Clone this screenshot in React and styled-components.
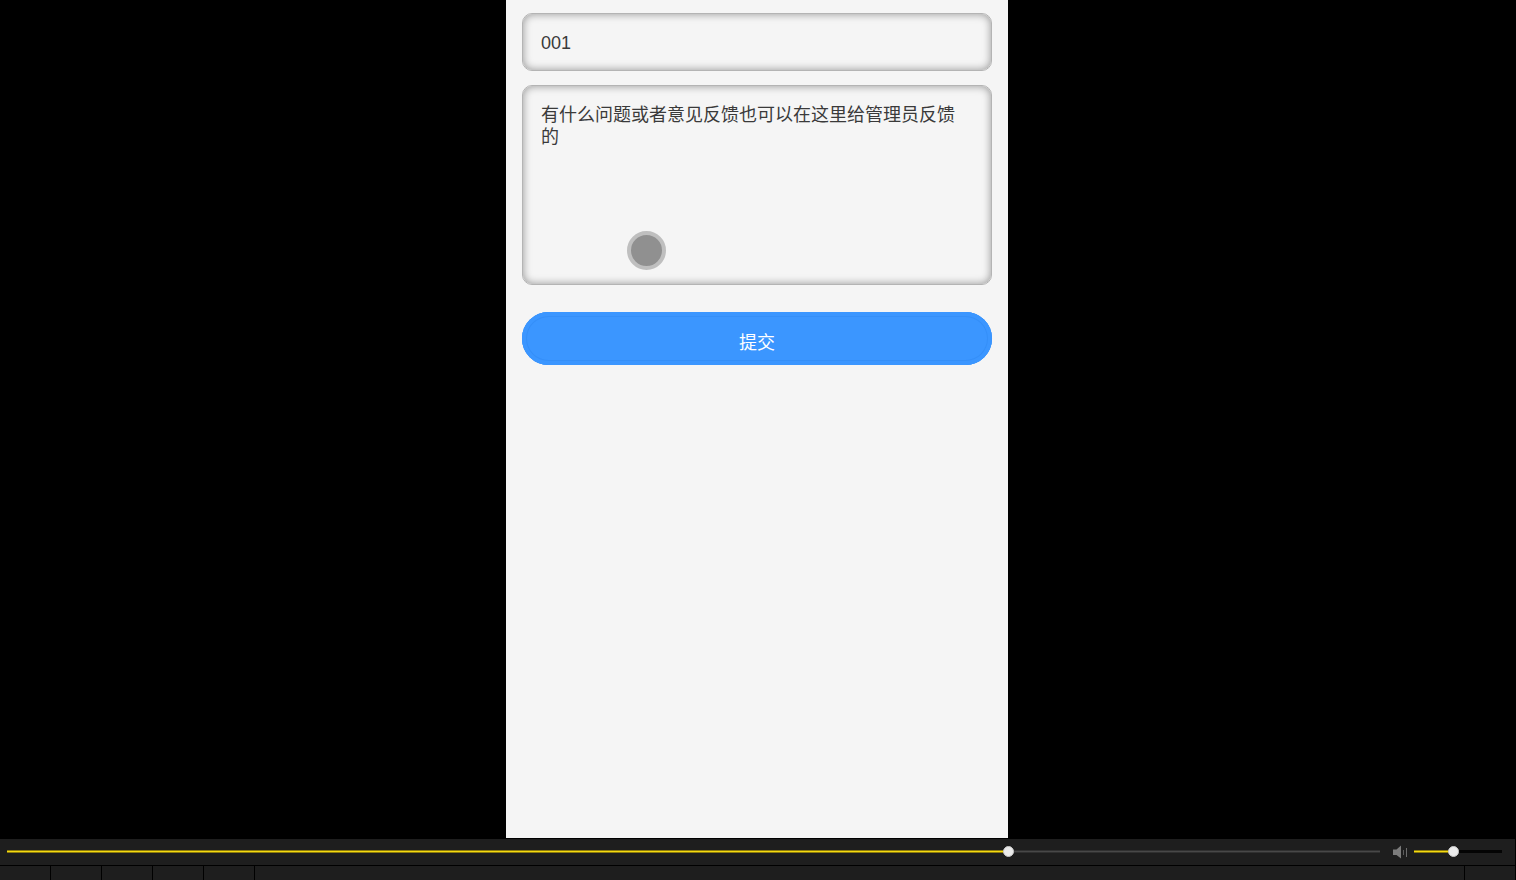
import React, { useState } from "react";
import styled, { createGlobalStyle } from "styled-components";

const GlobalStyle = createGlobalStyle`
    * {
        box-sizing: border-box;
    }
    body {
        margin: 0;
        background-color: #000;
        font-family: "Liberation Sans", "Noto Sans CJK SC", sans-serif;
    }
`;

const TOOL_BUTTONS = ["播放", "停止", "上一个", "下一个", "打开"];

const App = () => {
    const [progress, setProgress] = useState(73.1);
    const [volume, setVolume] = useState(44.2);

    return (
        <Player>
            <GlobalStyle />
            <Stage>
                <Screen onSubmit={(e) => e.preventDefault()}>
                    <NumberInput aria-label="编号" defaultValue="001" />
                    <MessageBox>
                        <Message
                            aria-label="反馈内容"
                            spellCheck={false}
                            defaultValue="有什么问题或者意见反馈也可以在这里给管理员反馈的"
                        />
                        <TouchPoint />
                    </MessageBox>
                    <SubmitButton type="submit">提交</SubmitButton>
                </Screen>
            </Stage>
            <SeekBar>
                <Slider
                    type="range"
                    aria-label="进度"
                    min="0"
                    max="100"
                    step="0.1"
                    $rest="linear-gradient(#303030 1px, #484848 1px 2px, #303030 2px)"
                    value={progress}
                    onChange={(e) => setProgress(e.target.value)}
                    style={{ "--fill": `${progress}%` }}
                />
                <MuteButton type="button" aria-label="静音">
                    <svg width="16" height="14" viewBox="0 0 16 14">
                        <path d="M1 4.5h3.500l4.500-4v13l-4.500-3.500H1z" fill="#7c7c7c" />
                        <path d="M11.5 5v5" stroke="#5c5c5c" />
                        <path d="M14.500 3v9" stroke="#6c6c6c" />
                    </svg>
                </MuteButton>
                <Volume>
                    <Slider
                        type="range"
                        aria-label="音量"
                        min="0"
                        max="100"
                        step="0.1"
                        $rest="#040404"
                        value={volume}
                        onChange={(e) => setVolume(e.target.value)}
                        style={{ "--fill": `${volume}%` }}
                    />
                </Volume>
            </SeekBar>
            <ToolBar>
                {TOOL_BUTTONS.map((name) => (
                    <ToolButton key={name} type="button" aria-label={name} />
                ))}
                <Spacer />
                <ToolButton type="button" aria-label="全屏" />
            </ToolBar>
        </Player>
    );
};

const Player = styled.div`
    display: flex;
    flex-direction: column;
    height: 100vh;
    overflow: hidden;
`;

const Stage = styled.main`
    flex: 1;
    min-height: 0;
    display: flex;
    justify-content: center;
    padding-bottom: 1px;
`;

const Screen = styled.form`
    width: 100%;
    max-width: 502px;
    margin-right: 2px;
    padding: 13px 16px;
    display: flex;
    flex-direction: column;
    background-color: #f5f5f5;
`;

const fieldStyle = `
    display: block;
    width: 100%;
    border: 1px solid #b4b4b4;
    border-radius: 10px;
    outline: none;
    background-color: #f5f5f5;
    box-shadow: inset 0 0 8px rgba(0, 0, 0, 0.4);
    color: #3a3a3a;
    font-family: inherit;
    font-size: 18px;
    line-height: 22px;
`;

const NumberInput = styled.input`
    ${fieldStyle}
    height: 58px;
    padding: 2px 18px 0;
`;

const MessageBox = styled.div`
    position: relative;
    margin-top: 14px;
`;

const Message = styled.textarea`
    ${fieldStyle}
    height: 200px;
    padding: 18px 20px 18px 18px;
    resize: none;
    overflow: hidden;
`;

const TouchPoint = styled.span`
    position: absolute;
    top: 146px;
    left: 105px;
    width: 39px;
    height: 39px;
    border: 4px solid #bfbfbf;
    border-radius: 50%;
    background-color: #909090;
    pointer-events: none;
`;

const SubmitButton = styled.button`
    height: 53px;
    margin-top: 27px;
    padding: 4px 0 0;
    border: 0;
    border-radius: 27px;
    background-color: #3b96ff;
    box-shadow: inset 0 0 0 4px #3b96ff, inset 0 0 0 5px #358ff8;
    color: #fff;
    font-family: inherit;
    font-size: 18px;
    cursor: pointer;
`;

const SeekBar = styled.div`
    display: flex;
    align-items: center;
    height: 26px;
    padding: 0 13px 1px 7px;
    border-right: 1px solid #000;
    background-color: #1e1e1e;
`;

const Slider = styled.input`
    appearance: none;
    flex: 1;
    min-width: 0;
    height: 11px;
    margin: 0;
    background: transparent;
    cursor: pointer;

    &::-webkit-slider-runnable-track {
        height: 3px;
        background: linear-gradient(#8d7c0c 1px, #f5da10 1px 2px, #8d7c0c 2px) 0
                0 / var(--fill) 100% no-repeat,
            ${(props) => props.$rest};
    }
    &::-webkit-slider-thumb {
        appearance: none;
        width: 11px;
        height: 11px;
        margin-top: -4px;
        border: 1px solid #c8c8c8;
        border-radius: 50%;
        background-color: #ececec;
    }
`;

const MuteButton = styled.button`
    display: flex;
    margin: 0 6px 0 12px;
    padding: 0;
    border: 0;
    background: none;
    cursor: pointer;
`;

const Volume = styled.div`
    display: flex;
    width: 88px;
`;

const ToolBar = styled.div`
    display: flex;
    height: 15px;
    border-top: 1px solid #000;
    background-color: #1e1e1e;
`;

const ToolButton = styled.button`
    width: 51px;
    padding: 0;
    border: 0;
    border-right: 1px solid #000;
    background-color: #1e1e1e;
    cursor: pointer;
`;

const Spacer = styled.div`
    flex: 1;
    border-right: 1px solid #000;
`;

export default App;
